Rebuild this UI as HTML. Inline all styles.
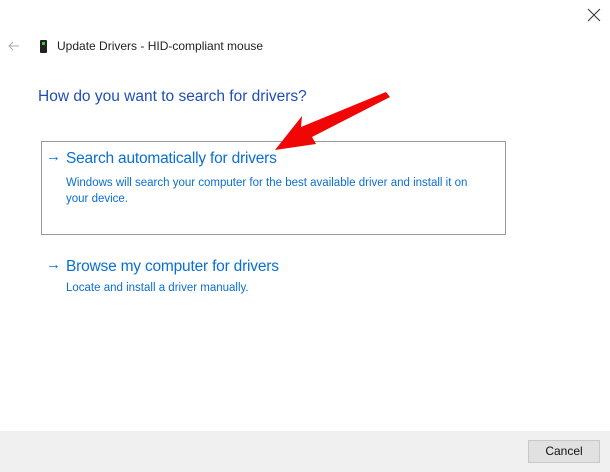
<!DOCTYPE html>
<html><head><style>
body{margin:0;width:610px;height:472px;background:#fff;font-family:"Liberation Sans",sans-serif;position:relative;overflow:hidden}
.a{position:absolute;white-space:nowrap}
.blue{color:#0a6fd0}
</style></head><body>
<svg class="a" style="left:587px;top:8px" width="14" height="14"><path d="M1 1L13 13M13 1L1 13" stroke="#333" stroke-width="1"/></svg>
<svg class="a" style="left:8px;top:41px" width="12" height="10"><path d="M11 5H1M5 1L1 5L5 9" stroke="#aaa" stroke-width="1" fill="none"/></svg>
<div class="a" style="left:40px;top:40px;width:7px;height:13px;background:#222;border-radius:1px"></div>
<div class="a" style="left:42px;top:42px;width:3px;height:3px;background:#3c3"></div>
<div class="a" style="left:57px;top:39px;font-size:12px;color:#222">Update Drivers - HID-compliant mouse</div>
<div class="a" style="left:38px;top:88px;font-size:15.5px;color:#1f4fb4">How do you want to search for drivers?</div>
<div class="a" style="left:41px;top:141px;width:463px;height:92px;border:1px solid #999"></div>
<div class="a blue" style="left:46px;top:148px;font-size:15px">→</div>
<div class="a blue" style="left:66px;top:150px;font-size:15.5px;letter-spacing:-0.2px">Search automatically for drivers</div>
<div class="a blue" style="left:66px;top:175px;font-size:11.5px;line-height:16px;white-space:normal;width:415px">Windows will search your computer for the best available driver and install it on your device.</div>
<div class="a blue" style="left:46px;top:256px;font-size:15px">→</div>
<div class="a blue" style="left:66px;top:258px;font-size:15.5px;letter-spacing:-0.2px">Browse my computer for drivers</div>
<div class="a blue" style="left:66px;top:282px;font-size:11.5px">Locate and install a driver manually.</div>
<svg class="a" style="left:0;top:0" width="610" height="472"><path d="M275 150L302 116L301 127L386 92L390 97L312 137L316 144Z" fill="#f00605"/></svg>
<div class="a" style="left:0;top:431px;width:610px;height:41px;background:#f0f0f0"></div>
<div class="a" style="left:528px;top:440px;width:70px;height:21px;background:#e1e1e1;border:1px solid #c8c8c8;font-size:12px;color:#111;text-align:center;line-height:21px">Cancel</div>
</body></html>
